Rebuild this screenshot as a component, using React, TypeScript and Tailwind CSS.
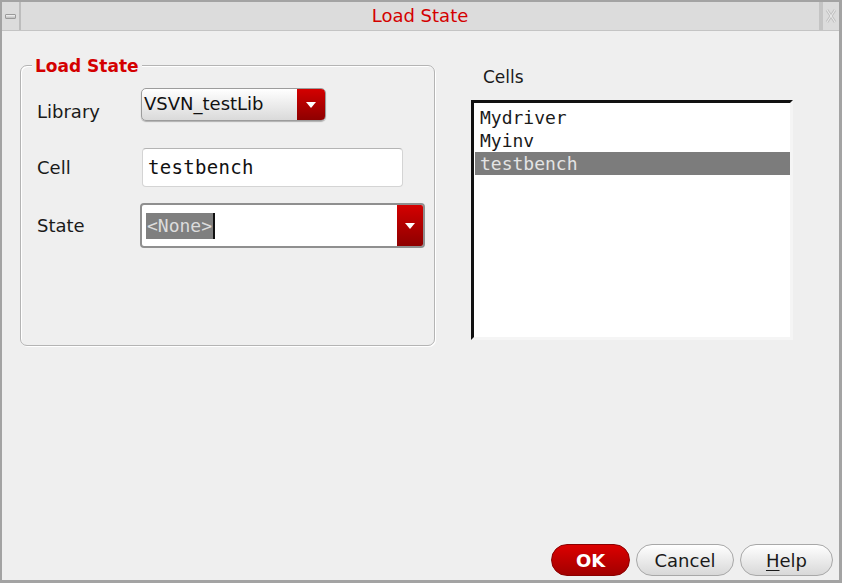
import React from "react";

const sans = { fontFamily: '"DejaVu Sans", "Liberation Sans", sans-serif' };
const mono = { fontFamily: '"DejaVu Sans Mono", "Liberation Mono", monospace' };

function RedArrow({ className }: { className: string }) {
  return (
    <div className={`flex items-center justify-center bg-gradient-to-b from-[#d40000] to-[#8e0000] ${className}`}>
      <svg width="12" height="8" viewBox="0 0 12 8">
        <path d="M1 1 L11 1 L6 7 Z" fill="#ffffff" />
      </svg>
    </div>
  );
}

export default function App() {
  return (
    <div className="w-[842px] h-[583px] bg-[#a3a3a3] p-[2px] pr-[3px] pb-[3px] flex flex-col" style={sans}>
      {/* title bar */}
      <div className="h-[29px] flex bg-[#dcdcdc] border-b border-[#c4c4c4]">
        <div className="w-[19px] border-r-2 border-[#bdbdbd] flex items-center justify-center">
          <div className="w-[11px] h-[5px] bg-gradient-to-b from-[#f4f4f4] to-[#bcbcbc] border border-[#9a9a9a] rounded-[1px]" />
        </div>
        <div className="flex-1 flex items-center justify-center text-[#d40000] text-[18px] pb-[1px]">Load State</div>
        <div className="w-[4px] bg-[#c4c4c4]" />
        <div className="w-[16px] flex items-center justify-center">
          <svg width="12" height="16" viewBox="0 0 12 16">
            <path d="M2 2 L10 14 M10 2 L2 14" stroke="#c2c2c2" strokeWidth="3" fill="none" />
            <path d="M2 2 L10 14 M10 2 L2 14" stroke="#eeeeee" strokeWidth="1" fill="none" />
          </svg>
        </div>
      </div>

      {/* body */}
      <div className="flex-1 bg-[#efefef] flex flex-col">
        <div className="flex flex-1">
          {/* group box */}
          <div className="ml-[18px] mt-[34px] w-[415px] h-[281px] relative border border-[#b4b4b4] rounded-[7px] shadow-[inset_1px_1px_0_#ffffff,1px_1px_0_#ffffff]">
            <div className="absolute left-[11px] top-[-10px] px-[3px] bg-[#efefef] text-[#d40000] font-bold text-[17px] leading-[20px]">Load State</div>

            {/* Library row */}
            <div className="flex items-center mt-[22px] h-[33px]">
              <div className="w-[120px] pl-[16px] text-[18px] text-[#1a1a1a] translate-y-[7px]">Library</div>
              <div className="w-[185px] h-[33px] flex rounded-[5px] border border-[#9c9c9c] bg-gradient-to-b from-[#ffffff] to-[#dadada] overflow-hidden shadow-[0_1px_1px_#b0b0b0]">
                <div className="flex-1 pl-[2px] text-[18px] text-[#111] leading-[30px]">VSVN_testLib</div>
                <RedArrow className="w-[28px] h-full" />
              </div>
            </div>

            {/* Cell row */}
            <div className="flex items-center mt-[27px] h-[39px]">
              <div className="w-[121px] pl-[16px] text-[18px] text-[#1a1a1a]">Cell</div>
              <div className="w-[261px] h-[39px] bg-white rounded-[4px] border border-[#d4d4d4] border-t-[#b4b4b4] flex items-center pl-[5px] text-[19px] tracking-[0.3px] text-[#111]" style={mono}>
                testbench
              </div>
            </div>

            {/* State row */}
            <div className="flex items-center mt-[16px] h-[45px]">
              <div className="w-[119px] pl-[16px] text-[18px] text-[#1a1a1a]">State</div>
              <div className="w-[285px] h-[45px] flex rounded-[4px] border-2 border-[#8f8f8f] bg-white overflow-hidden">
                <div className="flex-1 flex items-center pl-[4px]">
                  <span className="bg-[#7f7f7f] text-[#dcdcdc] text-[18px] leading-[26px] px-[1px]" style={mono}>&lt;None&gt;</span>
                  <span className="w-[2px] h-[26px] bg-[#111]" />
                </div>
                <RedArrow className="w-[26px] h-full" />
              </div>
            </div>
          </div>

          {/* Cells list */}
          <div className="ml-[36px] mt-[36px] flex flex-col">
            <div className="pl-[12px] text-[17px] text-[#1a1a1a] leading-[20px]">Cells</div>
            <div className="mt-[13px] w-[322px] h-[240px] bg-white border-l-[3px] border-t-[3px] border-[#111] border-r-[3px] border-r-[#f5f5f5] border-b-[3px] border-b-[#f5f5f5] pt-[3px] pl-[1px] pr-[0px]" style={mono}>
              <div className="h-[23px] leading-[23px] pl-[5px] text-[18px] text-[#1a1a1a]">Mydriver</div>
              <div className="h-[23px] leading-[23px] pl-[5px] text-[18px] text-[#1a1a1a]">Myinv</div>
              <div className="h-[23px] leading-[23px] pl-[5px] text-[18px] text-[#e4e4e4] bg-[#7c7c7c]">testbench</div>
            </div>
          </div>
        </div>

        {/* buttons */}
        <div className="flex justify-end gap-[6px] pr-[6px] pb-[3px] h-[36px] items-start">
          <button className="w-[79px] h-[32px] rounded-full bg-gradient-to-b from-[#dc0000] to-[#a20000] border border-[#8a0000] text-white font-bold text-[18px]">OK</button>
          <button className="w-[98px] h-[32px] rounded-full bg-gradient-to-b from-[#ffffff] to-[#d8d8d8] border border-[#a8a8a8] text-[#1a1a1a] text-[18px]">Cancel</button>
          <button className="w-[93px] h-[32px] rounded-full bg-gradient-to-b from-[#ffffff] to-[#d8d8d8] border border-[#a8a8a8] text-[#1a1a1a] text-[18px]"><span className="underline underline-offset-[3px]">H</span>elp</button>
        </div>
      </div>
    </div>
  );
}
